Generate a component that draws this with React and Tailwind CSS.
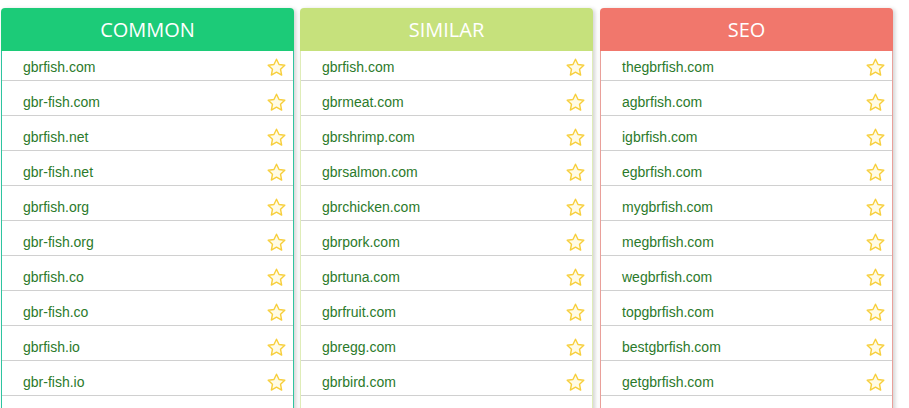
import React from 'react';

const columns = [
  {
    title: 'COMMON',
    head: 'bg-[#1ccb78]',
    border: 'border-[#2ec4a0]',
    items: ['gbrfish.com', 'gbr-fish.com', 'gbrfish.net', 'gbr-fish.net', 'gbrfish.org', 'gbr-fish.org', 'gbrfish.co', 'gbr-fish.co', 'gbrfish.io', 'gbr-fish.io'],
  },
  {
    title: 'SIMILAR',
    head: 'bg-[#c6e17c]',
    border: 'border-[#dfecb8]',
    items: ['gbrfish.com', 'gbrmeat.com', 'gbrshrimp.com', 'gbrsalmon.com', 'gbrchicken.com', 'gbrpork.com', 'gbrtuna.com', 'gbrfruit.com', 'gbregg.com', 'gbrbird.com'],
  },
  {
    title: 'SEO',
    head: 'bg-[#f1776c]',
    border: 'border-[#e9a09a]',
    items: ['thegbrfish.com', 'agbrfish.com', 'igbrfish.com', 'egbrfish.com', 'mygbrfish.com', 'megbrfish.com', 'wegbrfish.com', 'topgbrfish.com', 'bestgbrfish.com', 'getgbrfish.com'],
  },
];

const Star = () => (
  <svg width="21" height="21" viewBox="0 0 24 24" fill="#fffbe6" stroke="#f7cf3c" strokeWidth="1.6" strokeLinejoin="round">
    <path d="M12 2.5l2.9 6.1 6.6.8-4.9 4.6 1.3 6.6L12 17.3l-5.9 3.3 1.3-6.6-4.9-4.6 6.6-.8z" />
  </svg>
);

export default function App() {
  return (
    <div className="w-[909px] h-[408px] overflow-hidden bg-white flex items-start gap-[6px] pl-[1px] pt-[8px]">
      {columns.map((col) => (
        <div key={col.title} className="w-[293px] shrink-0 flex flex-col shadow-[2px_1px_4px_rgba(0,0,0,0.18)] rounded-t-[4px] last:ml-[1px]">
          <div className={`${col.head} h-[43px] shrink-0 rounded-t-[4px] flex items-center justify-center text-white text-[20px] font-['Open_Sans',sans-serif]`}>
            {col.title}
          </div>
          <div className={`border-x ${col.border} bg-white`}>
            {col.items.map((d, i) => (
              <div
                key={d}
                className={`${i === 0 ? 'h-[30px] pt-[4px]' : 'h-[35px] pt-[9px]'} flex items-center justify-between pl-[21px] pr-[6px] border-b border-[#d0d0d0]`}
              >
                <span className="text-[14px] text-[#2b7a2b] font-['Liberation_Sans',Arial,sans-serif]">{d}</span>
                <Star />
              </div>
            ))}
            <div className="h-[35px]" />
          </div>
        </div>
      ))}
    </div>
  );
}
